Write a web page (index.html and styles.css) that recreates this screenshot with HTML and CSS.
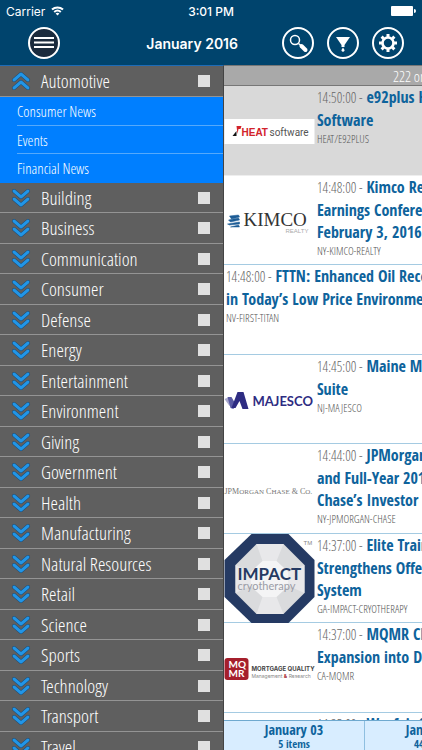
FILE: index.html
```html
<!DOCTYPE html>
<html lang="en">
<head>
    <meta charset="UTF-8">
    <meta name="viewport" content="width=device-width, initial-scale=1.0">
    <title>January 2016</title>
    <link rel="stylesheet" href="styles.css">
</head>
<body>
    <!-- shared icons -->
    <svg class="defs" width="0" height="0">
        <symbol id="down" viewBox="0 0 20 20">
            <path class="edge" d="M3 3l7 6 7-6M3 11l7 6 7-6"/>
            <path class="line" d="M3 3l7 6 7-6M3 11l7 6 7-6"/>
        </symbol>
        <symbol id="up" viewBox="0 0 20 20">
            <path class="edge" d="M3 9l7-6 7 6M3 17l7-6 7 6"/>
            <path class="line" d="M3 9l7-6 7 6M3 17l7-6 7 6"/>
        </symbol>
    </svg>

    <div class="app">
        <header>
            <div class="status">
                <span class="carrier">Carrier
                    <svg width="13" height="10" viewBox="0 0 13 10" fill="none" stroke="#fff" stroke-width="2">
                        <path d="M1 3.6a8 8 0 0 1 11 0M3.2 6a5 5 0 0 1 6.6 0"/>
                        <path d="M6.5 9.6L4.6 7.6a2.8 2.8 0 0 1 3.8 0z" fill="#fff" stroke="none"/>
                    </svg>
                </span>
                <span class="clock">3:01 PM</span>
                <span class="power">
                    <svg width="25" height="10" viewBox="0 0 25 10" fill="#fff">
                        <rect width="22" height="10" rx="1"/>
                        <path d="M23 3a2 2 0 0 1 0 4z"/>
                    </svg>
                </span>
            </div>
            <nav>
                <button class="round menu" aria-label="Menu">
                    <svg width="32" height="32" viewBox="0 0 32 32" stroke="#fff" stroke-width="2">
                        <path d="M6 11h20M6 15.500h20M6 20h20"/>
                    </svg>
                </button>
                <h1>January 2016</h1>
                <div class="tools">
                    <button class="round" aria-label="Search">
                        <svg width="32" height="32" viewBox="0 0 32 32" fill="none" stroke="#fff">
                            <circle cx="13" cy="13" r="4.500" stroke-width="1.500"/>
                            <path d="M16.500 16.500l3 2.500" stroke-width="1.500"/>
                            <path d="M19.500 19l4 4" stroke-width="4" stroke-linecap="round"/>
                        </svg>
                    </button>
                    <button class="round" aria-label="Filter">
                        <svg width="32" height="32" viewBox="0 0 32 32" fill="#fff">
                            <path d="M9 10h14l-5.500 8v2h-3v-2z"/>
                            <path d="M16 20.500q1.800 2.500 1.500 3.300a1.600 1.600 0 0 1-3 0q-.3-.8 1.500-3.300z"/>
                        </svg>
                    </button>
                    <button class="round" aria-label="Settings">
                        <svg width="32" height="32" viewBox="0 0 32 32" fill="none" stroke="#fff">
                            <circle cx="16" cy="16" r="5.500" stroke-width="2.600"/>
                            <path d="M16 10V7M16 25v-3M10 16H7M25 16h-3M11.700 11.700L9.600 9.600M22.400 22.400l-2.100-2.100M11.700 20.300l-2.100 2.100M22.400 9.600l-2.100 2.100" stroke-width="3"/>
                        </svg>
                    </button>
                </div>
            </nav>
        </header>

        <div class="content">
            <aside>
                <div class="cat open">
                    <button><svg class="arrow"><use href="#up"/></svg>Automotive</button>
                    <input type="checkbox" aria-label="Automotive">
                </div>
                <ul class="sub">
                    <li><a href="#">Consumer News</a></li>
                    <li><a href="#">Events</a></li>
                    <li><a href="#">Financial News</a></li>
                </ul>
                <div class="cats" id="cats"></div>
            </aside>

            <main>
                <div class="count">222 on</div>
                <div class="news">
                    <article class="selected">
                        <svg class="logo" viewBox="0 0 90 90">
                            <rect y="33" width="90" height="25" fill="#fff"/>
                            <path d="M12 40h5l-1 3h-2l-1 5z" fill="#d2232a"/>
                            <path d="M8 50l4-5v5z" fill="#111"/>
                            <text x="17" y="50" class="heat">HEAT</text>
                            <text x="45" y="50" class="soft">software</text>
                        </svg>
                        <div class="text">
                            <h2><time>14:50:00 -</time> e92plus H<br>Software</h2>
                            <p>HEAT/E92PLUS</p>
                        </div>
                    </article>
                    <article>
                        <svg class="logo" viewBox="0 0 90 90">
                            <path d="M5 40l9-1 1 2-8 2zM4 44l10-2 1 2-9 2zM3 48l12-2v2l-10 1zM6 51h9l-1-2z" fill="#1d5c96" stroke="#1d5c96" stroke-width=".5"/>
                            <text x="19" y="50" class="kimco">KIMCO</text>
                            <text x="61" y="57" class="realty">REALTY</text>
                        </svg>
                        <div class="text">
                            <h2><time>14:48:00 -</time> Kimco Rea<br>Earnings Conferen<br>February 3, 2016</h2>
                            <p>NY-KIMCO-REALTY</p>
                        </div>
                    </article>
                    <article>
                        <div class="text">
                            <h2><time>14:48:00 -</time> FTTN: Enhanced Oil Recov<br>in Today’s Low Price Environment</h2>
                            <p>NV-FIRST-TITAN</p>
                        </div>
                    </article>
                    <article>
                        <svg class="logo" viewBox="0 0 90 90">
                            <path d="M0 44l5-2 3 6-3 3z" fill="#a9a9ce"/>
                            <path d="M3 42h4l4 7 3-8-5 13-3-1z" fill="#5a5ba4"/>
                            <path d="M13 37h6l5 17h-6l-3-8-4 7H7z" fill="#2e2c82"/>
                            <text x="28" y="51" class="majesco">MAJESCO</text>
                        </svg>
                        <div class="text">
                            <h2><time>14:45:00 -</time> Maine Mut<br>Suite</h2>
                            <p>NJ-MAJESCO</p>
                        </div>
                    </article>
                    <article>
                        <svg class="logo" viewBox="0 0 90 90">
                            <text x="0" y="50" class="jpm">JPM<tspan class="sc">ORGAN</tspan> C<tspan class="sc">HASE</tspan> &amp; C<tspan class="sc">O</tspan>.</text>
                        </svg>
                        <div class="text">
                            <h2><time>14:44:00 -</time> JPMorgan<br>and Full-Year 2015<br>Chase’s Investor R</h2>
                            <p>NY-JPMORGAN-CHASE</p>
                        </div>
                    </article>
                    <article>
                        <svg class="logo" viewBox="0 0 90 90">
                            <path d="M27 0h37l26 26v37L64 89H27L0 63V26z" fill="#253a63"/>
                            <path d="M32 10h27l21 21v28L59 80H32L11 59V31z" fill="#dadbdd"/>
                            <path d="M32 10h27L52 27H38zM80 31v28L64 52V38zM32 80h27l-7-17H38zM11 31v28l15-7V38z" fill="#e8e8ea"/>
                            <path d="M38 27h14l12 11v14L52 63H38L26 52V38z" fill="#f4f4f5"/>
                            <text x="79" y="11" class="tm">TM</text>
                            <text x="13" y="46" class="impact">IMPACT</text>
                            <text x="13" y="56" class="cryo">cryotherapy</text>
                        </svg>
                        <div class="text">
                            <h2><time>14:37:00 -</time> Elite Traini<br>Strengthens Offeri<br>System</h2>
                            <p>GA-IMPACT-CRYOTHERAPY</p>
                        </div>
                    </article>
                    <article>
                        <svg class="logo" viewBox="0 0 90 90">
                            <rect y="35" width="24" height="22" rx="3" fill="#a51f2c"/>
                            <text x="4" y="45" class="mq">MQ</text>
                            <text x="4" y="54" class="mq">MR</text>
                            <text x="27" y="48" class="mort">MORTGAGE QUALITY</text>
                            <text x="27" y="55" class="mgmt">Management <tspan class="amp">&amp;</tspan> Research</text>
                        </svg>
                        <div class="text">
                            <h2><time>14:37:00 -</time> MQMR Clo<br>Expansion into Dat</h2>
                            <p>CA-MQMR</p>
                        </div>
                    </article>
                    <article>
                        <div class="logo"></div>
                        <div class="text">
                            <h2><time>14:35:00 -</time> Wayfair Se</h2>
                        </div>
                    </article>
                </div>
                <div class="days">
                    <button>January 03<small>5 items</small></button>
                    <button>January 04<small>443 items</small></button>
                </div>
            </main>
        </div>
    </div>

    <script>
        var names = ["Building", "Business", "Communication", "Consumer", "Defense", "Energy",
            "Entertainment", "Environment", "Giving", "Government", "Health", "Manufacturing",
            "Natural Resources", "Retail", "Science", "Sports", "Technology", "Transport", "Travel"];
        var html = "";
        for (var i = 0; i < names.length; i++) {
            html += '<div class="cat"><button><svg class="arrow"><use href="#down"/></svg>' + names[i] +
                '</button><input type="checkbox" aria-label="' + names[i] + '"></div>';
        }
        document.querySelector("#cats").innerHTML = html;
    </script>
</body>
</html>
```
FILE: styles.css
```css
* {
    box-sizing: border-box;
}
body {
    margin: 0;
    font-family: "Open Sans Condensed Light", "Roboto Condensed", "Noto Sans Condensed", "Open Sans", sans-serif;
}
h1, h2, p, ul {
    margin: 0;
    padding: 0;
}
button {
    margin: 0;
    padding: 0;
    border: 0;
    background: none;
    color: inherit;
    font-family: inherit;
    font-weight: inherit;
}
.defs {
    position: absolute;
}
.app {
    display: flex;
    flex-direction: column;
    height: 100vh;
    overflow: hidden;
}

/* header */
header {
    flex: none;
    height: 65px;
    background: #00446d;
    color: #fff;
    font-family: Inter, Roboto, sans-serif;
    font-weight: 400;
}
.status {
    display: grid;
    grid-template-columns: 1fr auto 1fr;
    align-items: center;
    height: 22px;
    padding: 0 6px;
    font-size: 12px;
}
.carrier svg {
    margin-left: 2px;
}
.clock {
    font-weight: 500;
}
.power {
    display: flex;
    justify-content: flex-end;
}
nav {
    display: grid;
    grid-template-columns: 1fr auto 1fr;
    align-items: center;
    height: 42px;
    padding: 0 18px 0 28px;
}
h1 {
    margin-right: 44px;
    font-size: 14px;
    font-weight: 600;
}
.tools {
    display: flex;
    justify-content: flex-end;
    gap: 13px;
}
.round {
    display: flex;
    align-items: center;
    justify-content: center;
    width: 32px;
    height: 32px;
    border: 2px solid #fff;
    border-radius: 50%;
}
.round svg {
    flex: none;
}
.menu {
    background: #1b2b3d;
}

.content {
    display: flex;
    flex: 1;
    min-height: 0;
}

/* categories */
aside {
    flex: none;
    width: 224px;
    border-top: 1px solid #1d6cb8;
    border-right: 1px solid #444;
    background: #5f5f5f;
    overflow: hidden;
}
.cat {
    display: flex;
    align-items: center;
    height: 30px;
    padding: 0 13px 0 11px;
    border-bottom: 1px solid #949494;
    color: #fff;
}
.open, .cat:nth-child(even) {
    height: 31px;
}
.cat button {
    display: flex;
    flex: 1;
    align-items: center;
    gap: 10px;
    font-size: 19px;
    line-height: 24px;
}
.arrow {
    width: 20px;
    height: 20px;
    fill: none;
    stroke-linecap: round;
    stroke-linejoin: round;
}
.edge {
    stroke: #17456e;
    stroke-width: 4;
}
.line {
    stroke: #2295e6;
    stroke-width: 3;
}
.cat input {
    appearance: none;
    width: 12px;
    height: 12px;
    margin: 0;
    background: #e0e0e0;
}
.sub {
    padding-left: 17px;
    background: #007fff;
    list-style: none;
}
.sub a {
    display: block;
    height: 29px;
    border-bottom: 1px solid #55a9fb;
    color: #fff;
    font-size: 15px;
    line-height: 28px;
    text-decoration: none;
}
.sub li:nth-child(2) a {
    height: 28px;
}
.sub li:last-child a {
    border-bottom: 0;
}

/* news list */
main {
    display: flex;
    flex: 0 0 100%;
    flex-direction: column;
    min-height: 0;
    background: #fff;
}
.count {
    flex: none;
    height: 21px;
    padding-left: 169px;
    border-top: 1px solid #777;
    border-bottom: 1px solid #777;
    background: #a9a9a9;
    color: #fff;
    font-size: 15px;
    line-height: 20px;
}
.news {
    flex: 1;
    min-height: 0;
    overflow: hidden;
}
article {
    display: flex;
    height: 90px;
    border-bottom: 1px solid #a5cbe2;
}
article:nth-child(even) {
    height: 89px;
}
.selected {
    border-color: #eee;
    background: #d9d9d9;
}
.logo {
    flex: none;
    width: 91px;
    height: 90px;
}
.text {
    padding-left: 2px;
    white-space: nowrap;
}
h2 {
    color: #0e639c;
    font-family: "Open Sans Condensed", "Open Sans", sans-serif;
    font-size: 16px;
    font-weight: 700;
    line-height: 22px;
}
time {
    color: #666;
    font-family: "Open Sans Condensed Light", "Roboto Condensed", "Noto Sans Condensed", "Open Sans", sans-serif;
    font-size: 14px;
    font-weight: 400;
}
.text p {
    color: #555;
    font-size: 11px;
    line-height: 16px;
}

/* logo lettering */
.heat {
    fill: #d2232a;
    font: bold 10px "Liberation Sans";
}
.soft {
    fill: #555;
    font: 10px Roboto;
}
.kimco {
    fill: #333;
    font: 19px "Liberation Serif";
}
.realty {
    fill: #aaa;
    font: 6px "Liberation Sans";
}
.majesco {
    fill: #2e2c82;
    font: bold 13px Lato;
}
.jpm {
    fill: #777;
    font: 8px "Liberation Serif";
}
.sc {
    font-size: 7px;
}
.tm {
    fill: #888;
    font: 6px "Liberation Sans";
}
.impact {
    fill: #253a63;
    font: bold 17px Lato;
}
.cryo {
    fill: #9a9ca6;
    font: 11px Lato;
}
.mq {
    fill: #fff;
    font: bold 10px Lato;
}
.mort {
    fill: #444;
    font: bold 6px Inter;
}
.mgmt {
    fill: #888;
    font: 5px Inter;
}
.amp {
    fill: #a51f2c;
    font-weight: bold;
}

/* day tabs */
.days {
    display: flex;
    flex: none;
    height: 30px;
    border-top: 1px solid #6fa9cf;
    background: #d8edff;
}
.days button {
    flex: 0 0 141px;
    border-right: 1px solid #8fbfe0;
    color: #0e639c;
    font-family: "Open Sans Condensed", "Open Sans", sans-serif;
    font-size: 14px;
    font-weight: 700;
    line-height: 16px;
}
.days small {
    display: block;
    font-size: 11px;
    line-height: 12px;
}
```
